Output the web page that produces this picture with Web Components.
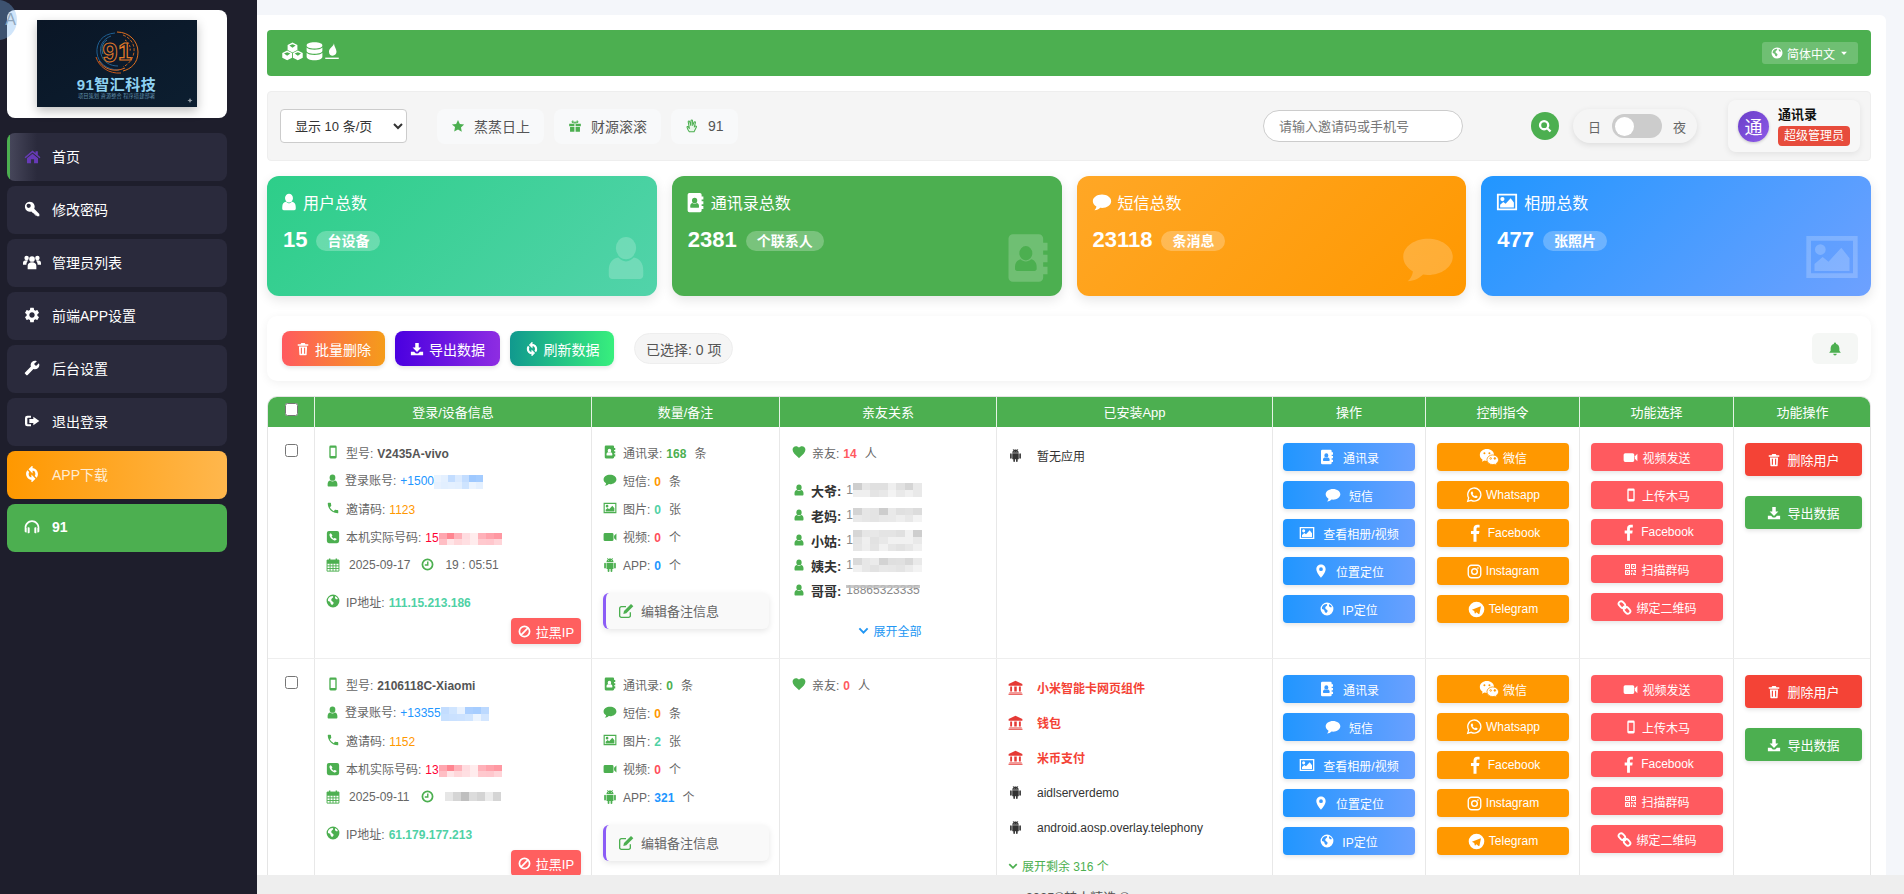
<!DOCTYPE html>
<html lang="zh-CN">
<head>
<meta charset="utf-8">
<title>91</title>
<style>
  html, body { margin: 0; height: 100%; overflow: hidden; }
  body { font: 12px "Liberation Sans", "Noto Sans CJK SC", sans-serif; color: #555; background: #f4f6fa; }
</style>
</head>
<body>
<app-shell></app-shell>
<script>
const FONT = `"Liberation Sans", "Noto Sans CJK SC", sans-serif`;

const cube = (x, y) => {
    const r = 5.6, h = r / 2;
    return `M${x} ${y - r}L${x + r} ${y - h}V${y + h}L${x} ${y + r}L${x - r} ${y + h}V${y - h}Z`
        + `M${x} ${y - r + 2}L${x - r + 2} ${y - h + .6}L${x} ${y + .4}L${x + r - 2} ${y - h + .6}Z`;
};

const ICONS = {
    home: `<path d="M12 3.5 .8 13l1.3 1.5L12 6.2l9.9 8.3 1.3-1.5-3.7-3.2V4.5h-3.2v2.7z"/><path d="M4.2 14.4V21.5h5.6v-5.6h4.4v5.6h5.6v-7.1L12 8z"/>`,
    key: `<path fill-rule="evenodd" d="M8.500 1a7.500 7.500 0 0 1 6.800 10.700L23 19.400V23h-3.400l-1-1.200-1.400.2-.2-1.600-1.600-.1-.2-1.600-1.500-.2-2.800-2.800A7.500 7.500 0 1 1 8.500 1zM7 4a3.200 3.200 0 1 0 0 6.400A3.200 3.200 0 0 0 7 4z"/>`,
    group: `<circle cx="12" cy="8" r="3.8"/><path d="M6.2 21.5v-4.2c0-3 2.4-4.8 5.800-4.800s5.800 1.800 5.800 4.800v4.200z"/><circle cx="4.800" cy="6.800" r="3"/><path d="M0 15.800v-2.400c0-2.300 1.700-3.700 4.300-3.700.9 0 1.800.2 2.400.5-1.400 1.200-2.200 3-2.200 5.600z"/><circle cx="19.200" cy="6.800" r="3"/><path d="M24 15.800v-2.400c0-2.300-1.700-3.700-4.300-3.700-.9 0-1.800.2-2.400.5 1.400 1.200 2.200 3 2.200 5.600z"/>`,
    cog: `<path d="M19.14 12.94c.04-.3.06-.61.06-.94 0-.32-.02-.64-.07-.94l2.03-1.58a.49.49 0 0 0 .12-.61l-1.92-3.32a.488.488 0 0 0-.59-.22l-2.39.96c-.5-.38-1.03-.7-1.62-.94l-.36-2.54a.484.484 0 0 0-.48-.41h-3.84c-.24 0-.43.17-.47.41l-.36 2.54c-.59.24-1.13.57-1.62.94l-2.39-.96c-.22-.08-.47 0-.59.22L2.74 8.87c-.12.21-.08.47.12.61l2.03 1.58c-.05.3-.09.63-.09.94s.02.64.07.94l-2.03 1.58a.49.49 0 0 0-.12.61l1.92 3.32c.12.22.37.29.59.22l2.39-.96c.5.38 1.03.7 1.62.94l.36 2.54c.05.24.24.41.48.41h3.84c.24 0 .44-.17.47-.41l.36-2.54c.59-.24 1.13-.56 1.62-.94l2.39.96c.22.08.47 0 .59-.22l1.92-3.32c.12-.22.07-.47-.12-.61l-2.01-1.58zM12 15.6c-1.98 0-3.6-1.62-3.6-3.6s1.62-3.6 3.6-3.6 3.6 1.62 3.6 3.6-1.62 3.6-3.6 3.6z"/>`,
    wrench: `<path transform="translate(24 0) scale(-1 1)" d="M22.7 19l-9.1-9.1c.9-2.3.4-5-1.5-6.9-2-2-5-2.4-7.4-1.3L9 6 6 9 1.6 4.7C.4 7.1.9 10.1 2.9 12.1c1.9 1.9 4.6 2.4 6.9 1.5l9.1 9.1c.4.4 1 .4 1.4 0l2.3-2.3c.5-.4.5-1.1.1-1.4z"/>`,
    signout: `<path d="M5 4h5.500v3H6a1 1 0 0 0-1 1v8a1 1 0 0 0 1 1h4.500v3H5a3.500 3.500 0 0 1-3.500-3.500v-9A3.500 3.500 0 0 1 5 4z"/><path d="M14 5.500 23 12l-9 6.500V15H8V9h6z"/>`,
    refresh: `<path stroke="currentColor" stroke-width="1.800" d="M12 4V1L8 5l4 4V6c3.310 0 6 2.690 6 6 0 1.010-.25 1.970-.7 2.800l1.460 1.460C19.540 15.030 20 13.570 20 12c0-4.420-3.580-8-8-8zm0 14c-3.310 0-6-2.690-6-6 0-1.010.25-1.970.7-2.800L5.240 7.740C4.460 8.970 4 10.430 4 12c0 4.420 3.580 8 8 8v3l4-4-4-4v3z"/>`,
    headphones: `<path d="M12 2C5.900 2 1 6.900 1 13v5.500c0 1 .8 1.800 1.800 1.800H4V13.500H3.500V13a8.500 8.500 0 0 1 17 0v.5H20v6.800h1.200c1 0 1.800-.8 1.800-1.800V13c0-6.100-4.900-11-11-11z"/><path d="M5.500 12.500h1.700c.7 0 1.300.6 1.300 1.300v6.400c0 .7-.6 1.300-1.300 1.300H5.500zM18.500 12.500h-1.700c-.7 0-1.300.6-1.300 1.300v6.400c0 .7.6 1.300 1.300 1.300h1.700z"/>`,
    cubes: `<path fill-rule="evenodd" d="${cube(12, 7.4)}${cube(5.9, 16.4)}${cube(18.1, 16.4)}"/>`,
    database: `<path d="M12 1.500C6.500 1.500 3 3 3 5s3.500 3.500 9 3.500S21 7 21 5s-3.500-3.500-9-3.500z"/><path d="M3 7.500V11c0 2 3.500 3.500 9 3.500s9-1.500 9-3.500V7.500c-1.500 1.700-5 2.500-9 2.500S4.500 9.200 3 7.500z"/><path d="M3 13.500V18c0 2.200 3.500 4 9 4s9-1.800 9-4v-4.500c-1.500 1.700-5 2.500-9 2.500s-7.500-.8-9-2.500z"/>`,
    flame: `<path d="M14.500 0c.8 4-6.500 6.500-6.500 11.500 0 3.300 2 5.500 4.800 5.500 3 0 5.200-2.400 5.200-5.200 0-4-3-6.500-3.500-11.800z"/><rect x="3" y="19.500" width="18" height="1.800"/>`,
    globe: `<path fill-rule="evenodd" d="M12 1a11 11 0 1 1 0 22 11 11 0 0 1 0-22zM5 6.500C3.500 8 3 10 3.500 12c1.500.5 3.500.8 4 2.500s1 3.500 3 4.500c1.500-1 2.500-2.500 2.500-4 0-1.800-2.500-2-3.500-3.500S9 8 11.500 6.500C13 5.500 12.500 3.500 11 3.500 8.500 3.700 6.500 5 5 6.500zM16 3.800c-.8 1-1 3 .5 4.500 1.500 1.300 3 1 3.800.2-.8-2.200-2.300-3.800-4.300-4.700z"/>`,
    caret: `<path d="M5 9h14l-7 7.500z"/>`,
    star: `<path d="M12 1.500l3.200 6.900 7.300.9-5.400 5.100 1.400 7.500L12 17.800l-6.500 3.600 1.400-7.500L1.500 9.300l7.300-.9z"/>`,
    gift: `<path d="M2 8h9v4.500H2zM13 8h9v4.500h-9zM3.500 13.500H11V22H3.500zM13 13.500h7.500V22H13z"/><path fill-rule="evenodd" d="M12 7.500C9 7.500 5.800 7 6.200 4.200 6.700 1.500 10.500 2 12 6.500 13.500 2 17.300 1.500 17.800 4.200 18.200 7 15 7.500 12 7.500zM8.200 4.300c-.5.8.5 1.500 2.200 1.600-.6-1.300-1.600-2.300-2.200-1.600zm7.600 0c-.6-.7-1.600.3-2.200 1.600 1.700-.1 2.700-.8 2.200-1.600z"/>`,
    hand: `<path fill="#e8f5e9" stroke="currentColor" stroke-width="1.800" stroke-linejoin="round" d="M7.500 22C5.500 20 4.200 17 3.500 14.500c-.4-1.500 1.300-2.200 2.200-1L7.500 16 5.500 5C5.200 3.300 7.500 2.800 8 4.500L10 11l.3-8c.1-1.700 2.500-1.700 2.600 0l.4 8 2.200-5.500c.7-1.500 2.800-.8 2.400.8L16 13.500l1.800-1.300c1.400-.8 2.600.8 1.600 2L15.500 22z"/>`,
    search: `<path fill="none" stroke="currentColor" stroke-width="4" d="M10.500 3.500a7 7 0 1 1 0 14 7 7 0 0 1 0-14zM15.800 15.800l5.700 5.700"/>`,
    user: `<ellipse cx="12" cy="6.800" rx="5.300" ry="5.800"/><path d="M8 11.800c1 1.200 2.500 2 4 2s3-.8 4-2c3 .4 5 2.800 5 6.700v2.500c0 1-.8 2-2 2H5c-1.200 0-2-1-2-2v-2.500c0-3.900 2-6.300 5-6.700z"/>`,
    addressbook: `<path fill-rule="evenodd" d="M5 1h12a2 2 0 0 1 2 2v2h2v3.500h-2v2h2V14h-2v2h2v3.500h-2V21a2 2 0 0 1-2 2H5a2 2 0 0 1-2-2V3a2 2 0 0 1 2-2zM11 6.500a3 3.300 0 1 0 0 6.600 3 3.300 0 0 0 0-6.600zM8.600 12.600c-1.500.3-2.600 1.500-2.600 3.400v1c0 .6.400 1 1 1h8c.6 0 1-.4 1-1v-1c0-1.900-1.100-3.100-2.600-3.400-.6.6-1.500 1-2.400 1s-1.800-.4-2.400-1z"/>`,
    comment: `<path d="M12 3C6 3 1 6.500 1 11c0 2.700 1.700 5 4.300 6.500-.2 1.700-1 3.200-2.300 4.400 2.800-.2 5.200-1.300 6.800-3 .7.1 1.400.2 2.200.2 6 0 11-3.600 11-8.100S18 3 12 3z"/>`,
    picture: `<path fill-rule="evenodd" d="M1 3h22v18H1zM3 5v14h18V5zM7 6.500a2.300 2.300 0 1 1 0 4.600 2.300 2.300 0 0 1 0-4.600zM4.500 18v-3l3.500-3 2.500 2 5.500-6 3.500 4.500V18z"/>`,
    trash: `<path fill-rule="evenodd" d="M9 1.500h6l1.200 2.500H21v2.500H3V4h4.800zM5 7.500h14l-.8 14.500c0 .5-.4.800-.9.800H6.700c-.5 0-.9-.3-.9-.8zM8.300 10v10h1.900V10zm5.500 0v10h1.900V10z"/>`,
    download: `<path d="M9 1.500h6v8h4.500L12 17 4.500 9.500H9z"/><path d="M1.500 16.500H7l3 3h4l3-3h5.500v6h-21z"/>`,
    ban: `<path fill="none" stroke="currentColor" stroke-width="3.200" d="M12 2.600a9.400 9.400 0 1 1 0 18.800 9.400 9.400 0 0 1 0-18.800zM5.500 18.500l13-13"/>`,
    mobile: `<path fill-rule="evenodd" d="M8 1h8a2.300 2.300 0 0 1 2.300 2.300v17.400A2.300 2.300 0 0 1 16 23H8a2.300 2.300 0 0 1-2.300-2.300V3.300A2.300 2.300 0 0 1 8 1zM8 4.500V19h8V4.500z"/>`,
    phone: `<path d="M6.620 10.790c1.440 2.830 3.760 5.140 6.590 6.590l2.200-2.200c.27-.27.67-.36 1.020-.24 1.120.37 2.330.57 3.570.57.55 0 1 .45 1 1V20c0 .55-.45 1-1 1-9.390 0-17-7.610-17-17 0-.55.45-1 1-1h3.500c.55 0 1 .45 1 1 0 1.250.2 2.450.57 3.570.11.35.03.74-.25 1.020l-2.200 2.200z"/>`,
    phonesquare: `<path fill-rule="evenodd" d="M5 1.500h14A3.500 3.500 0 0 1 22.500 5v14a3.500 3.500 0 0 1-3.500 3.500H5A3.500 3.500 0 0 1 1.500 19V5A3.500 3.500 0 0 1 5 1.500zM8 5.500c-1.500.7-2.300 2-2 3.500.9 4 4.300 7.500 8.300 8.800 1.700.5 3.300-.3 3.900-1.800.2-.4 0-.8-.4-1l-2.500-1.300c-.3-.2-.7-.1-.9.100l-1 1.100c-1.600-.8-3-2.200-3.800-3.800l1-1c.3-.3.300-.6.200-.9l-1.300-2.500c-.2-.5-1-.9-1.500-.7z"/>`,
    calendar: `<path d="M5 1h2.500v3H5zM16.500 1H19v3h-2.500z"/><path fill="none" stroke="currentColor" stroke-width="1.600" d="M1.800 3.500h20.400v19H1.800zM1.800 9h20.400M1.800 13.500h20.400M1.800 18h20.400M7 9v13.500M12 9v13.500M17 9v13.500"/><path d="M1.800 3.500h20.400V9H1.800z"/>`,
    clock: `<path fill="none" stroke="currentColor" stroke-width="3.200" d="M12 2.600a9.400 9.400 0 1 1 0 18.800 9.400 9.400 0 0 1 0-18.800z"/><path fill="none" stroke="currentColor" stroke-width="2.600" d="M12.500 6.500V13H7"/>`,
    edit: `<path fill="none" stroke="currentColor" stroke-width="2" d="M18.500 14v5a2.500 2.500 0 0 1-2.500 2.500H5A2.500 2.500 0 0 1 2.500 19V8A2.500 2.500 0 0 1 5 5.500h7"/><path d="M19.500 1.500 23 5 12.500 15.500l-4.500 1 1-4.500z"/>`,
    video: `<path d="M3.500 5h12A2.500 2.500 0 0 1 18 7.500v9a2.500 2.500 0 0 1-2.500 2.500h-12A2.500 2.500 0 0 1 1 16.500v-9A2.500 2.500 0 0 1 3.500 5z"/><path d="M19 10l4-4v12l-4-4z"/>`,
    android: `<path d="M6 18c0 .55.45 1 1 1h1v3.500c0 .83.67 1.500 1.500 1.500s1.500-.67 1.500-1.500V19h2v3.500c0 .83.67 1.500 1.500 1.500s1.500-.67 1.500-1.500V19h1c.55 0 1-.45 1-1V8H6v10zM3.500 8C2.670 8 2 8.670 2 9.500v7c0 .83.67 1.500 1.500 1.500S5 17.330 5 16.500v-7C5 8.670 4.330 8 3.500 8zm17 0c-.83 0-1.500.67-1.500 1.500v7c0 .83.67 1.500 1.500 1.500s1.500-.67 1.500-1.500v-7c0-.83-.67-1.500-1.500-1.500zm-4.970-5.840l1.300-1.300c.2-.2.2-.51 0-.71-.2-.2-.51-.2-.71 0l-1.480 1.480C13.850 1.230 12.950 1 12 1c-.96 0-1.860.23-2.660.63L7.850.15c-.2-.2-.51-.2-.71 0-.2.2-.2.51 0 .71l1.310 1.310C6.970 3.260 6 5.010 6 7h12c0-1.990-.97-3.750-2.470-4.840zM10 5H9V4h1v1zm5 0h-1V4h1v1z"/>`,
    heart: `<path d="M12 22.500l-1.500-1.400C5 16 1 12.400 1 8c0-3.300 2.600-5.800 5.900-5.800 2 0 3.900 1 5.100 2.500 1.200-1.500 3.100-2.500 5.100-2.500C20.400 2.200 23 4.700 23 8c0 4.400-4 8-9.500 13.100z"/>`,
    chevron: `<path fill="none" stroke="currentColor" stroke-width="4.200" d="M3 7.500l9 9 9-9"/>`,
    bank: `<path fill-rule="evenodd" d="M12 1 1 6.500V9h22V6.500zM3.500 10.500v8h3v-8zm6.500 0v8h4v-8zm7.500 0v8h3v-8zM2 19.800h20V21H2zM.8 22h22.400v1.500H.8z"/>`,
    wechat: `<path fill-rule="evenodd" d="M9.500 2.500C4.800 2.500 1 5.700 1 9.600c0 2.300 1.300 4.300 3.300 5.600L3.500 17.800l3-1.500c.9.300 2 .4 3 .4 4.700 0 8.500-3.200 8.500-7.100S14.200 2.500 9.500 2.500zM6.500 6.300a1.200 1.200 0 1 1 0 2.400 1.200 1.200 0 0 1 0-2.400zm6 0a1.200 1.200 0 1 1 0 2.400 1.200 1.200 0 0 1 0-2.400z"/><path fill-rule="evenodd" stroke="#ff9800" stroke-width="1" d="M16.500 9.500c-4 0-7 2.700-7 5.800s3 5.800 7 5.800c.8 0 1.600-.1 2.300-.3l2.600 1.200-.7-2.200c1.700-1.100 2.800-2.700 2.800-4.500 0-3.100-3-5.800-7-5.800zm-2.500 3.200a1 1 0 1 1 0 2 1 1 0 0 1 0-2zm5 0a1 1 0 1 1 0 2 1 1 0 0 1 0-2z"/>`,
    whatsapp: `<path fill="none" stroke="currentColor" stroke-width="2" d="M2.500 21.500 4 16.300A9.800 9.800 0 1 1 7.800 20z"/><path d="M8.500 7c.5-.5 1.200-.4 1.400.1l.9 2c.1.3 0 .6-.2.8l-.7.8c.8 1.400 2 2.600 3.500 3.300l.9-1c.2-.2.5-.3.8-.1l1.900 1c.4.2.5.7.3 1.100-.5 1.200-1.800 1.900-3.100 1.600-3.500-.8-6.200-3.500-7-6.900-.2-1.100.1-2.100.8-2.700z"/>`,
    facebook: `<path d="M14 23.500V13.300h3.300l.6-4h-3.900V6.800c0-1.200.4-2 2-2h2.100V1.200c-.4-.1-1.600-.2-3-.2-3 0-5.100 1.800-5.100 5.200v3.100H6.600v4H10v10.200z"/>`,
    instagram: `<rect x="2" y="2" width="20" height="20" rx="5.500" fill="none" stroke="currentColor" stroke-width="2.200"/><circle cx="12" cy="12" r="4.500" fill="none" stroke="currentColor" stroke-width="2.200"/><circle cx="17.500" cy="6.500" r="1.300"/>`,
    telegram: `<path fill-rule="evenodd" d="M12 1a11 11 0 1 1 0 22 11 11 0 0 1 0-22zM5.500 12.300l11.700-4.700c.6-.2 1.100.2.900.9l-2 9.400c-.1.6-.6.800-1.100.5l-3.200-2.400-1.500 1.500c-.3.300-.6.300-.7-.1l-.8-3.300z"/>`,
    qrcode: `<path fill-rule="evenodd" d="M2 2h9v9H2zM4 4v5h5V4zM13 2h9v9h-9zM15 4v5h5V4zM2 13h9v9H2zM4 15v5h5v-5zM5.500 5.500h2v2h-2zM16.500 5.500h2v2h-2zM5.500 16.500h2v2h-2zM13 13h3v3h-3zM18 13h4v5h-2v-3h-2zM13 18h2v4h-2zM17 18h2v2h3v2h-5z"/>`,
    link: `<g fill="none" stroke="currentColor" stroke-width="3" transform="rotate(48 12 12)"><rect x="0" y="8" width="11.500" height="8" rx="4"/><rect x="12.500" y="8" width="11.500" height="8" rx="4"/><path d="M9 12h6"/></g>`,
    marker: `<path fill-rule="evenodd" d="M12 1C7.600 1 4 4.600 4 9c0 5.800 8 14.500 8 14.500S20 14.800 20 9c0-4.400-3.600-8-8-8zm0 11a3.200 3.200 0 1 1 0-6.400 3.200 3.200 0 0 1 0 6.400z"/>`,
};

class AppIcon extends HTMLElement {
    constructor() {
        super();
        this.attachShadow({mode: "open"});
    }
    connectedCallback() {
        const size = this.getAttribute("size") || 14;
        this.shadowRoot.innerHTML = `
        <style>
          :host{display:inline-flex;flex:none;width:${size}px;height:${size}px;align-items:center;justify-content:center;}
          svg{width:100%;height:100%;display:block;fill:currentColor;}
        </style>
        <svg viewBox="0 0 24 24">${ICONS[this.getAttribute("name")] || ""}</svg>`;
    }
}

// redacted numbers in the table are shown as pixel blocks
class MosaicMask extends HTMLElement {
    constructor() {
        super();
        this.attachShadow({mode: "open"});
    }
    connectedCallback() {
        const w = +this.getAttribute("w");
        const h = +this.getAttribute("h");
        const color = this.getAttribute("color") || "120,120,120";
        const cell = +this.getAttribute("cell") || 8;
        const max = +this.getAttribute("max") || .4;
        let seed = +this.getAttribute("seed") || 7;
        const cols = Math.ceil(w / cell);
        const rows = Math.max(1, Math.round(h / 7));
        let cells = "";
        for (let i = 0; i < cols * rows; i++) {
            seed = (seed * 137 + 71) % 251;
            const top = i < cols ? 1 : .45;
            cells += `<i style="background:rgba(${color},${(.08 + seed / 251 * max * top).toFixed(2)})"></i>`;
        }
        this.shadowRoot.innerHTML = `
        <style>
          :host{display:inline-block;vertical-align:middle;width:${w}px;height:${h}px;overflow:hidden;}
          div{display:grid;width:100%;height:100%;grid-template-columns:repeat(${cols},1fr);grid-template-rows:repeat(${rows},1fr);filter:blur(.7px);}
        </style>
        <div>${cells}</div>`;
    }
}

class BrandLogo extends HTMLElement {
    constructor() {
        super();
        this.attachShadow({mode: "open"});
        this.shadowRoot.innerHTML = `
        <style>
          :host{display:block;width:160px;height:87px;box-shadow:0 4px 10px rgba(0,0,0,.25);}
          svg{display:block;width:160px;height:87px;}
          text{font-family:${FONT};text-anchor:middle;}
        </style>
        <svg viewBox="0 0 160 87">
          <defs><linearGradient id="bg" x1="0" y1="0" x2="1" y2="1"><stop offset="0" stop-color="#0a1626"/><stop offset="1" stop-color="#0c1e30"/></linearGradient></defs>
          <rect width="160" height="87" fill="url(#bg)"/>
          <g fill="none" stroke-width="1">
            <path d="M78 13C65 14 59 23 60 33s10 17 22 17" stroke="#1f5f92"/>
            <path d="M74 16c-8 3-12 10-10 18s9 12 17 12" stroke="#245f8e"/>
            <path d="M70 20c-5 3-6 9-4 14" stroke="#2a6a9c"/>
            <path d="M62 41c5 8 15 12 26 7" stroke="#e0681d"/>
            <path d="M59 37c3 10 13 17 25 16" stroke="#c9581a"/>
            <path d="M80 12c12 0 21 9 21 20s-7 17-15 19" stroke="#e0701f"/>
            <path d="M86 15c8 3 12 10 11 17s-5 12-11 15" stroke="#c4601b" stroke-dasharray="3 1.500"/>
            <path d="M88 20c4 2 6 7 5 12" stroke="#d86a1e" stroke-dasharray="2 1.500"/>
          </g>
          <text x="73" y="42" font-size="27" font-weight="700" fill="none" stroke="#e07a2a" stroke-width="1">9</text>
          <text x="88" y="40" font-size="24" font-weight="700" fill="none" stroke="#e27a28" stroke-width="1.200">1</text>
          <text x="79.500" y="70" font-size="15" font-weight="700" letter-spacing=".5" fill="#8fd1f2">91智汇科技</text>
          <text x="79.500" y="78" font-size="5.300" fill="#5f8caa">项目策划 资源整合 程序搭建部署</text>
          <path d="M153 78l.8 1.700 1.700.8-1.700.8-.8 1.700-.8-1.700-1.700-.8 1.700-.8z" fill="#9aa3ab"/>
        </svg>`;
    }
}

class SideItem extends HTMLElement {
    constructor() {
        super();
        this.attachShadow({mode: "open"});
    }
    connectedCallback() {
        const size = +this.getAttribute("size") || 16;
        this.shadowRoot.innerHTML = `
        <style>
          :host{display:flex;align-items:center;height:48px;box-sizing:border-box;padding:0 0 2px 17px;border-radius:8px;
                background:#2a2a3c;color:#fff;font-size:14px;}
          :host([kind=active]){background:linear-gradient(90deg,#4caf50 0 3px,#46465a 3px,#2a2a3c 30px);}
          :host([kind=download]){background:linear-gradient(90deg,#ff9800,#ffb74d);color:rgba(255,255,255,.82);}
          :host([kind=green]){background:#4caf50;font-weight:700;}
          .box{display:flex;align-items:center;justify-content:center;width:16px;margin-right:12px;}
          :host([kind=active]) app-icon{color:#673ab7;}
          :host([kind=download]) app-icon{color:#fff;}
        </style>
        <div class="box"><app-icon name="${this.getAttribute("icon")}" size="${size}"></app-icon></div><slot></slot>`;
    }
}

class SideBar extends HTMLElement {
    constructor() {
        super();
        this.attachShadow({mode: "open"});
        this.shadowRoot.innerHTML = `
        <style>
          :host{display:flex;flex-direction:column;width:257px;height:100%;flex:none;box-sizing:border-box;padding:10px 30px 0 7px;background:#1e1e2c;position:relative;}
          .logo{height:108px;background:#fff;border-radius:8px;display:flex;justify-content:center;padding-top:10px;box-sizing:border-box;margin-bottom:15px;}
          nav{display:flex;flex-direction:column;gap:5px;}
          .translate{position:absolute;left:-21px;top:0;width:38px;height:40px;border-radius:50%;background:rgba(120,180,240,.35);color:#8fa5bb;font-size:16px;
                     display:flex;align-items:center;justify-content:flex-end;padding-right:1px;box-sizing:border-box;}
        </style>
        <div class="logo"><brand-logo></brand-logo></div>
        <nav>
          <side-item icon="home" size="17" kind="active">首页</side-item>
          <side-item icon="key">修改密码</side-item>
          <side-item icon="group" size="18">管理员列表</side-item>
          <side-item icon="cog" size="18">前端APP设置</side-item>
          <side-item icon="wrench">后台设置</side-item>
          <side-item icon="signout">退出登录</side-item>
          <side-item icon="refresh" kind="download">APP下载</side-item>
          <side-item icon="headphones" kind="green">91</side-item>
        </nav>
        <div class="translate">A</div>`;
    }
}

class TopHeader extends HTMLElement {
    constructor() {
        super();
        this.attachShadow({mode: "open"});
        this.shadowRoot.innerHTML = `
        <style>
          :host{display:flex;align-items:center;justify-content:space-between;height:46px;padding:0 13px 0 15px;background:#4caf50;border-radius:4px;color:#fff;}
          .icons{display:flex;align-items:center;gap:1px;margin-top:-3px;}
          .lang{display:flex;align-items:center;gap:4px;height:22px;width:96px;justify-content:center;box-sizing:border-box;background:rgba(255,255,255,.2);border-radius:3px;font-size:12px;}
        </style>
        <div class="icons"><app-icon name="cubes" size="21"></app-icon><app-icon name="database" size="21"></app-icon><app-icon name="flame" size="18" style="margin-left:-3px"></app-icon></div>
        <div class="lang"><app-icon name="globe" size="12"></app-icon>简体中文<app-icon name="caret" size="10"></app-icon></div>`;
    }
}

class ToolChip extends HTMLElement {
    constructor() {
        super();
        this.attachShadow({mode: "open"});
    }
    connectedCallback() {
        this.shadowRoot.innerHTML = `
        <style>
          :host{display:flex;align-items:center;gap:9px;height:35px;padding:0 14px;box-sizing:border-box;background:#f8f9fa;border-radius:8px;font-size:14px;color:#555;}
          app-icon{color:#4caf50;}
        </style>
        <app-icon name="${this.getAttribute("icon")}" size="14"></app-icon><slot></slot>`;
    }
}

class ToolBar extends HTMLElement {
    constructor() {
        super();
        this.attachShadow({mode: "open"});
        this.shadowRoot.innerHTML = `
        <style>
          :host{display:flex;align-items:center;height:70px;box-sizing:border-box;margin-top:15px;padding:0 10px 0 12px;background:#f5f5f5;border:1px solid #eee;border-radius:4px;font-family:${FONT};}
          select{width:127px;height:34px;margin-right:30px;padding:0 10px;font:13px ${FONT};color:#333;background:#fff;border:1px solid #ccc;border-radius:4px;}
          .chips{display:flex;align-items:center;gap:10px;}
          .spacer{flex:1;}
          input{width:200px;height:32px;box-sizing:border-box;padding:0 15px;font:13px ${FONT};background:#fff;border:1px solid #ccc;border-radius:16px;outline:none;}
          input::placeholder{color:#777;}
          .go{width:28px;height:28px;margin-left:68px;border-radius:50%;background:#4caf50;color:#fff;display:flex;align-items:center;justify-content:center;}
          .mode{display:flex;align-items:center;gap:11px;width:124px;height:34px;box-sizing:border-box;margin-left:14px;padding-left:15px;background:#f5f5f5;border-radius:17px;box-shadow:0 2px 6px rgba(0,0,0,.1);font-size:13px;color:#666;}
          .switch{width:50px;height:24px;background:#ccc;border-radius:12px;display:flex;align-items:center;padding-left:3px;box-sizing:border-box;}
          .switch i{width:19px;height:19px;background:#fff;border-radius:50%;}
          .me{display:flex;align-items:center;gap:9px;width:132px;height:52px;box-sizing:border-box;margin-left:31px;padding:0 10px;background:#f7f7f7;border-radius:8px;box-shadow:0 2px 6px rgba(0,0,0,.08);}
          .avatar{width:31px;height:31px;flex:none;border-radius:50%;background:linear-gradient(135deg,#6a3fc8,#8d5ae8);color:#fff;font-size:18px;display:flex;align-items:center;justify-content:center;box-shadow:0 1px 3px rgba(0,0,0,.2);}
          .who{display:flex;flex-direction:column;gap:3px;}
          b{font-size:13px;line-height:17px;color:#111;}
          em{font-style:normal;font-size:12px;line-height:20px;height:20px;padding:0 6px;background:#e74c3c;color:#fff;border-radius:4px;white-space:nowrap;}
        </style>
        <select><option>显示 10 条/页</option></select>
        <div class="chips">
          <tool-chip icon="star">蒸蒸日上</tool-chip>
          <tool-chip icon="gift">财源滚滚</tool-chip>
          <tool-chip icon="hand">91</tool-chip>
        </div>
        <div class="spacer"></div>
        <input placeholder="请输入邀请码或手机号">
        <div class="go"><app-icon name="search" size="14"></app-icon></div>
        <div class="mode">日<span class="switch"><i></i></span>夜</div>
        <div class="me"><div class="avatar">通</div><div class="who"><b>通讯录</b><em>超级管理员</em></div></div>`;
    }
}

class StatCard extends HTMLElement {
    constructor() {
        super();
        this.attachShadow({mode: "open"});
    }
    connectedCallback() {
        const icon = this.getAttribute("icon");
        this.shadowRoot.innerHTML = `
        <style>
          :host{display:block;position:relative;height:120px;box-sizing:border-box;padding:14px 15px 0 16px;border-radius:12px;color:#fff;background:var(--bg);box-shadow:0 4px 12px rgba(0,0,0,.1);overflow:hidden;}
          .title{display:flex;align-items:center;height:24px;font-size:16px;}
          .title app-icon{margin-left:var(--tml,-3px);margin-right:var(--tgap,5px);}
          .count{display:flex;align-items:center;gap:9px;height:24px;margin-top:14px;font-size:22px;font-weight:700;}
          .unit{font-size:14px;line-height:20px;height:20px;padding:0 11px;background:rgba(255,255,255,.25);border-radius:10px;margin-top:1px;}
          .big{position:absolute;right:var(--br,8px);bottom:var(--bb,14px);opacity:.2;color:#fff;}
        </style>
        <div class="title"><app-icon name="${icon}" size="${this.getAttribute("tsize") || 18}"></app-icon><slot></slot></div>
        <div class="count">${this.getAttribute("num")}<span class="unit">${this.getAttribute("unit")}</span></div>
        <app-icon class="big" name="${icon}" size="${this.getAttribute("bsize") || 50}"></app-icon>`;
    }
}

class ActBtn extends HTMLElement {
    constructor() {
        super();
        this.attachShadow({mode: "open"});
    }
    connectedCallback() {
        const size = this.getAttribute("size") || 14;
        this.shadowRoot.innerHTML = `
        <style>
          :host{display:flex;align-items:center;justify-content:center;gap:var(--gap,6px);flex:none;box-sizing:border-box;color:#fff;
                height:var(--h,28px);border-radius:var(--r,4px);background:var(--bg);font-size:var(--fs,12px);box-shadow:0 2px 4px rgba(0,0,0,.1);white-space:nowrap;}
        </style>
        <app-icon name="${this.getAttribute("icon")}" size="${size}"></app-icon><slot></slot>`;
    }
}

class BulkBar extends HTMLElement {
    constructor() {
        super();
        this.attachShadow({mode: "open"});
        this.shadowRoot.innerHTML = `
        <style>
          :host{display:flex;align-items:center;height:65px;box-sizing:border-box;margin-top:20px;padding:0 12px 0 15px;background:#fff;border-radius:10px;box-shadow:0 2px 10px rgba(0,0,0,.06);}
          .btns{display:flex;gap:10px;}
          act-btn{--h:35px;--r:8px;--fs:14px;--gap:5px;}
          .sel{display:flex;align-items:center;height:31px;box-sizing:border-box;margin-left:20px;padding:0 11px;background:#f5f5f5;border:1px solid #eee;border-radius:16px;font-size:14px;color:#555;}
          .bell{margin-left:auto;margin-right:1px;width:46px;height:31px;background:#f5f7f5;border-radius:6px;color:#4caf50;display:flex;align-items:center;justify-content:center;}
        </style>
        <div class="btns">
          <act-btn icon="trash" style="width:103px;--bg:linear-gradient(90deg,#ff5a5f,#f59c1a)">批量删除</act-btn>
          <act-btn icon="download" style="width:105px;--bg:linear-gradient(90deg,#4a00e0,#8e2de2)">导出数据</act-btn>
          <act-btn icon="refresh" style="width:104px;--bg:linear-gradient(90deg,#11998e,#38ef7d)">刷新数据</act-btn>
        </div>
        <div class="sel">已选择: 0 项</div>
        <div class="bell"><svg width="14" height="14" viewBox="0 0 24 24" fill="currentColor"><path d="M12 1a2 2 0 0 1 2 2v.4c3.500.9 5.500 3.800 5.500 7.600v4l2.500 3.500H2L4.500 15v-4c0-3.800 2-6.700 5.500-7.600V3a2 2 0 0 1 2-2zM9 20h6a3 3 0 0 1-6 0z"/></svg></div>`;
    }
}

// one line of icon + label + value in the info columns
class InfoLine extends HTMLElement {
    constructor() {
        super();
        this.attachShadow({mode: "open"});
    }
    connectedCallback() {
        this.shadowRoot.innerHTML = `
        <style>
          :host{display:flex;align-items:center;height:28.2px;gap:var(--gap,6px);font-size:12px;color:#666;white-space:nowrap;}
          app-icon{color:#4caf50;}
        </style>
        <app-icon name="${this.getAttribute("icon")}" size="${this.getAttribute("size") || 14}"></app-icon><span><slot></slot></span>`;
    }
}

const OPS = [
    ["addressbook", "通讯录", 16],
    ["comment", "短信", 16],
    ["picture", "查看相册/视频", 16],
    ["marker", "位置定位", 14],
    ["globe", "IP定位", 14],
];
const CTRL = [
    ["wechat", "微信", 20],
    ["whatsapp", "Whatsapp", 16],
    ["facebook", "Facebook", 18],
    ["instagram", "Instagram", 15],
    ["telegram", "Telegram", 17],
];
const FUNCS = [
    ["video", "视频发送", 15],
    ["mobile", "上传木马", 14],
    ["facebook", "Facebook", 17],
    ["qrcode", "扫描群码", 13],
    ["link", "绑定二维码", 15],
];
const DEVICES = [
    {
        model: "V2435A-vivo", account: "+1500", maskA: 49, code: "1123", phone: "15", maskP: 63,
        date: "2025-09-17", time: "19 : 05:51", ip: "111.15.213.186",
        contacts: 168, sms: 0, photos: 0, videos: 0, apps: 0, friends: 14,
        kin: ["大爷", "老妈", "小姑", "姨夫", "哥哥"], more: "",
        installed: [["android", "暂无应用", false]],
    },
    {
        model: "2106118C-Xiaomi", account: "+13355", maskA: 48, code: "1152", phone: "13", maskP: 63,
        date: "2025-09-11", time: "", ip: "61.179.177.213",
        contacts: 0, sms: 0, photos: 2, videos: 0, apps: 321, friends: 0,
        kin: [], more: "展开剩余 316 个",
        installed: [
            ["bank", "小米智能卡网页组件", true],
            ["bank", "钱包", true],
            ["bank", "米币支付", true],
            ["android", "aidlserverdemo", false],
            ["android", "android.aosp.overlay.telephony", false],
        ],
    },
];

const COLUMNS = "47px 277px 188px 217px 276px 153px 154px 154px 137px";

class UserRow extends HTMLElement {
    constructor(device) {
        super();
        this.attachShadow({mode: "open"});
        this.device = device;
    }
    connectedCallback() {
        const d = this.device;
        const kin = d.kin.map((name, i) => `
            <div class="kin"><app-icon name="user" size="12"></app-icon><b>${name}:</b>
            ${i < 4
                ? `<span class="num">1<mosaic-mask w="69" h="${i === 2 ? 21 : 14}" cell="9" max=".3" seed="${i * 9 + 3}"></mosaic-mask></span>`
                : `<span class="num last">18865323335<i></i></span>`}
            </div>`).join("");
        const apps = d.installed.map(([icon, name, hot]) => `
            <div class="app ${hot ? "hot" : ""}"><app-icon name="${icon}" size="${hot ? 15 : 13}"></app-icon><span>${name}</span></div>`).join("");
        const btns = (list, cls) => list.map(([icon, label, size]) => `
            <act-btn icon="${icon}" size="${size}" class="${cls} ${label === "Facebook" && cls === "red" ? "short" : ""}">${label}</act-btn>`).join("");
        this.shadowRoot.innerHTML = `
        <style>
          :host{display:grid;grid-template-columns:${COLUMNS};height:232px;box-sizing:border-box;border-bottom:1px solid #eee;background:#fff;}
          .c{border-right:1px solid #e8e8e8;box-sizing:border-box;min-width:0;}
          .c:last-child{border-right:0;}
          input{display:block;margin:17px auto 0;width:13px;height:13px;}
          .login{padding:11px 10px 0 11px;}
          .count{padding:11px 10px 0 11px;}
          .friend{padding:11px 8px 0 12px;}
          .apps{padding:11px 8px 0 11px;}
          .stack{display:flex;flex-direction:column;gap:10px;padding:16px 10px 0 11px;}
          .v{margin-left:4px;}
          .bold{font-weight:700;color:#555;}
          .blue{color:#2196ff;}
          .orange{color:#ff9800;}
          .redtxt{color:#ff0033;}
          .teal{font-weight:700;color:#4fd1a5;}
          .date{--gap:9px;}
          .date span{display:inline-flex;align-items:center;gap:11px;}
          .date app-icon{color:#4caf50;}
          .ip{margin-top:8px;}
          .block{display:flex;justify-content:flex-end;margin-top:3px;}
          .block act-btn{width:70px;--h:26px;--bg:#ff5f5f;--fs:13px;--gap:5px;--r:4px;}
          .n{font-weight:700;margin:0 8px 0 4px;}
          .note{display:flex;align-items:center;gap:7px;height:36px;margin-top:14px;padding-left:12px;box-sizing:border-box;background:#f9f9f9;border-left:3px solid #8b5cf6;border-radius:6px;box-shadow:0 2px 6px rgba(0,0,0,.1);font-size:13px;color:#666;}
          .note app-icon{color:#4caf50;}
          .kin{display:flex;align-items:center;height:25px;font-size:12px;color:#333;white-space:nowrap;}
          .kin app-icon{color:#4caf50;margin:0 6px 0 1px;}
          .kin b{font-size:13px;margin-right:5px;}
          .num{display:inline-flex;align-items:center;color:#888;position:relative;}
          .last{overflow:hidden;height:10px;}
          .last i{position:absolute;left:0;right:0;top:0;height:3px;background:rgba(190,190,190,.85);filter:blur(.6px);}
          .kins{margin-top:11.5px;}
          .expand{display:flex;align-items:center;justify-content:center;gap:4px;height:20px;margin-top:18px;color:#2196f3;font-size:12px;}
          .app{display:flex;align-items:center;height:35px;font-size:12px;color:#333;white-space:nowrap;}
          .app app-icon{width:15px;margin-right:14px;color:#333;}
          .hot{font-weight:700;color:#f44336;}
          .hot app-icon{color:#e53935;}
          .moreapps{display:flex;align-items:center;gap:4px;height:20px;margin-top:10.5px;color:#4caf50;font-size:12px;}
          .blue-btn{--bg:linear-gradient(90deg,#2196ff,#69a0ff);--gap:8px;}
          .orange-btn{--bg:#ff9800;--gap:4px;}
          .red{--bg:#ff5a5f;--gap:4px;}
          .short{--h:26px;}
          .big{--h:33px;--fs:13px;--gap:6px;}
          .stack.wide{gap:20px;padding-right:9px;}
          .stack.ops{padding-left:10px;}
        </style>
        <div class="c"><input type="checkbox"></div>
        <div class="c login">
          <info-line icon="mobile">型号:<span class="v bold">${d.model}</span></info-line>
          <info-line icon="user" size="13">登录账号:<span class="v blue">${d.account}</span><mosaic-mask w="${d.maskA}" h="14" color="33,130,255" seed="${d.maskA}"></mosaic-mask></info-line>
          <info-line icon="phone">邀请码:<span class="v orange">${d.code}</span></info-line>
          <info-line icon="phonesquare">本机实际号码:<span class="v redtxt">${d.phone}</span><mosaic-mask w="${d.maskP}" h="12" color="255,40,60" max=".5" seed="${d.maskP}"></mosaic-mask></info-line>
          <info-line class="date" icon="calendar"><span>${d.date}<app-icon name="clock" size="13"></app-icon>${d.time || `<mosaic-mask w="56" h="9" cell="9" max=".4" seed="11"></mosaic-mask>`}</span></info-line>
          <info-line class="ip" icon="globe">IP地址:<span class="v teal">${d.ip}</span></info-line>
          <div class="block"><act-btn icon="ban" size="13">拉黑IP</act-btn></div>
        </div>
        <div class="c count">
          <info-line icon="addressbook">通讯录:<span class="n" style="color:#4caf50">${d.contacts}</span>条</info-line>
          <info-line icon="comment">短信:<span class="n orange">${d.sms}</span>条</info-line>
          <info-line icon="picture">图片:<span class="n" style="color:#4fd1a5">${d.photos}</span>张</info-line>
          <info-line icon="video">视频:<span class="n" style="color:#ff4d5a">${d.videos}</span>个</info-line>
          <info-line icon="android">APP:<span class="n blue">${d.apps}</span>个</info-line>
          <div class="note"><app-icon name="edit" size="16"></app-icon>编辑备注信息</div>
        </div>
        <div class="c friend">
          <info-line icon="heart">亲友:<span class="n" style="color:#ff5a5f">${d.friends}</span>人</info-line>
          ${kin ? `<div class="kins">${kin}</div><div class="expand"><app-icon name="chevron" size="11"></app-icon>展开全部</div>` : ""}
        </div>
        <div class="c apps">${apps}${d.more ? `<div class="moreapps"><app-icon name="chevron" size="10"></app-icon>${d.more}</div>` : ""}</div>
        <div class="c stack ops">${btns(OPS, "blue-btn")}</div>
        <div class="c stack">${btns(CTRL, "orange-btn")}</div>
        <div class="c stack">${btns(FUNCS, "red")}</div>
        <div class="c stack wide">
          <act-btn class="big" icon="trash" style="--bg:#f44336">删除用户</act-btn>
          <act-btn class="big" icon="download" style="--bg:#4caf50">导出数据</act-btn>
        </div>`;
    }
}

class UserTable extends HTMLElement {
    constructor() {
        super();
        this.attachShadow({mode: "open"});
        const heads = ["登录/设备信息", "数量/备注", "亲友关系", "已安装App", "操作", "控制指令", "功能选择", "功能操作"];
        this.shadowRoot.innerHTML = `
        <style>
          :host{display:block;margin-top:15px;background:#fff;border:1px solid #e5e5e5;border-bottom:0;border-radius:10px 10px 0 0;}
          .head{display:grid;grid-template-columns:${COLUMNS};height:30px;background:#4caf50;border-radius:9px 9px 0 0;color:#fff;font-size:13px;}
          .head div{display:flex;align-items:center;justify-content:center;padding-bottom:1px;border-right:1px solid rgba(255,255,255,.85);box-sizing:border-box;}
          .head div:last-child{border-right:0;}
          .head input{margin:0 0 4px;width:13px;height:13px;}
        </style>
        <div class="head"><div><input type="checkbox"></div>${heads.map(h => `<div>${h}</div>`).join("")}</div>
        <div id="rows"></div>`;
        const rows = this.shadowRoot.getElementById("rows");
        DEVICES.forEach(d => rows.appendChild(new UserRow(d)));
    }
}

class AppShell extends HTMLElement {
    constructor() {
        super();
        this.attachShadow({mode: "open"});
        this.shadowRoot.innerHTML = `
        <style>
          :host{display:flex;height:894px;width:1904px;overflow:hidden;font-family:${FONT};}
          main{flex:1;min-width:0;display:flex;flex-direction:column;}
          .scroll{flex:1;min-height:0;overflow:hidden;padding:15px 18px 0 0;background:#f4f6fa;}
          .panel{background:#fff;border-radius:0 6px 0 0;padding:15px 15px 0 10px;height:100%;box-sizing:border-box;overflow:hidden;}
          .stats{display:grid;grid-template-columns:repeat(4,1fr);gap:15px;margin-top:15px;}
          footer{height:19px;flex:none;overflow:hidden;background:#eee;text-align:center;padding-top:13px;box-sizing:border-box;font-size:13px;line-height:19px;color:#555;padding-right:6px;}
        </style>
        <side-bar></side-bar>
        <main>
          <div class="scroll"><div class="panel">
            <top-header></top-header>
            <tool-bar></tool-bar>
            <div class="stats">
              <stat-card icon="user" num="15" unit="台设备" tsize="18" bsize="46" style="--bb:15px;--bg:linear-gradient(135deg,#2dce89,#52d3aa)">用户总数</stat-card>
              <stat-card icon="addressbook" num="2381" unit="个联系人" tsize="21" bsize="52" style="--bb:12px;--bg:#4caf50">通讯录总数</stat-card>
              <stat-card icon="comment" num="23118" unit="条消息" tsize="20" bsize="54" style="--tml:-1px;--tgap:6px;--br:11px;--bb:10px;--bg:linear-gradient(135deg,#ffa726,#ff9800)">短信总数</stat-card>
              <stat-card icon="picture" num="477" unit="张照片" tsize="22" bsize="56" style="--tml:-1px;--tgap:6px;--br:11px;--bb:11px;--bg:linear-gradient(135deg,#2196ff,#6ea1ff)">相册总数</stat-card>
            </div>
            <bulk-bar></bulk-bar>
            <user-table></user-table>
          </div></div>
          <footer>2025©转人精选 ©</footer>
        </main>`;
    }
}

customElements.define("app-icon", AppIcon);
customElements.define("mosaic-mask", MosaicMask);
customElements.define("brand-logo", BrandLogo);
customElements.define("side-item", SideItem);
customElements.define("side-bar", SideBar);
customElements.define("top-header", TopHeader);
customElements.define("tool-chip", ToolChip);
customElements.define("tool-bar", ToolBar);
customElements.define("stat-card", StatCard);
customElements.define("act-btn", ActBtn);
customElements.define("bulk-bar", BulkBar);
customElements.define("info-line", InfoLine);
customElements.define("user-row", UserRow);
customElements.define("user-table", UserTable);
customElements.define("app-shell", AppShell);
</script>
</body>
</html>
